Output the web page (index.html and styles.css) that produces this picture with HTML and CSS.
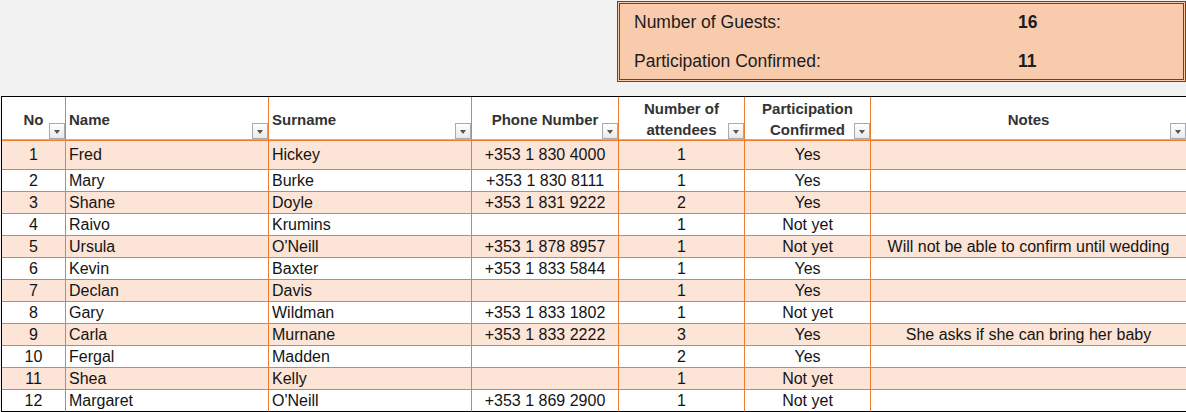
FILE: index.html
```html
<!DOCTYPE html>
<html>
<head>
<meta charset="utf-8">
<link rel="stylesheet" href="styles.css">
</head>
<body>
<div class="top">
  <div class="summary">
    <div class="s-label">Number of Guests:</div><div class="s-value">16</div>
    <div class="s-label">Participation Confirmed:</div><div class="s-value">11</div>
  </div>
</div>
<table class="guests">
  <colgroup>
    <col class="c-no"><col class="c-name"><col class="c-sur"><col class="c-phone"><col class="c-att"><col class="c-conf"><col class="c-notes">
  </colgroup>
  <thead>
    <tr>
      <th class="center">No<span class="filter"></span></th>
      <th class="left">Name<span class="filter"></span></th>
      <th class="left">Surname<span class="filter"></span></th>
      <th class="center">Phone Number<span class="filter"></span></th>
      <th class="center">Number of<br>attendees<span class="filter"></span></th>
      <th class="center">Participation<br>Confirmed<span class="filter"></span></th>
      <th class="center last">Notes<span class="filter"></span></th>
    </tr>
  </thead>
  <tbody>
    <tr class="band first"><td class="center">1</td><td>Fred</td><td>Hickey</td><td class="center">+353 1 830 4000</td><td class="center">1</td><td class="center">Yes</td><td class="center last"></td></tr>
    <tr><td class="center">2</td><td>Mary</td><td>Burke</td><td class="center">+353 1 830 8111</td><td class="center">1</td><td class="center">Yes</td><td class="center last"></td></tr>
    <tr class="band"><td class="center">3</td><td>Shane</td><td>Doyle</td><td class="center">+353 1 831 9222</td><td class="center">2</td><td class="center">Yes</td><td class="center last"></td></tr>
    <tr><td class="center">4</td><td>Raivo</td><td>Krumins</td><td class="center"></td><td class="center">1</td><td class="center">Not yet</td><td class="center last"></td></tr>
    <tr class="band"><td class="center">5</td><td>Ursula</td><td>O'Neill</td><td class="center">+353 1 878 8957</td><td class="center">1</td><td class="center">Not yet</td><td class="center last">Will not be able to confirm until wedding</td></tr>
    <tr><td class="center">6</td><td>Kevin</td><td>Baxter</td><td class="center">+353 1 833 5844</td><td class="center">1</td><td class="center">Yes</td><td class="center last"></td></tr>
    <tr class="band"><td class="center">7</td><td>Declan</td><td>Davis</td><td class="center"></td><td class="center">1</td><td class="center">Yes</td><td class="center last"></td></tr>
    <tr><td class="center">8</td><td>Gary</td><td>Wildman</td><td class="center">+353 1 833 1802</td><td class="center">1</td><td class="center">Not yet</td><td class="center last"></td></tr>
    <tr class="band"><td class="center">9</td><td>Carla</td><td>Murnane</td><td class="center">+353 1 833 2222</td><td class="center">3</td><td class="center">Yes</td><td class="center last">She asks if she can bring her baby</td></tr>
    <tr><td class="center">10</td><td>Fergal</td><td>Madden</td><td class="center"></td><td class="center">2</td><td class="center">Yes</td><td class="center last"></td></tr>
    <tr class="band"><td class="center">11</td><td>Shea</td><td>Kelly</td><td class="center"></td><td class="center">1</td><td class="center">Not yet</td><td class="center last"></td></tr>
    <tr class="final"><td class="center">12</td><td>Margaret</td><td>O'Neill</td><td class="center">+353 1 869 2900</td><td class="center">1</td><td class="center">Not yet</td><td class="center last"></td></tr>
  </tbody>
</table>
</body>
</html>
```
FILE: styles.css
```css
html, body {
  margin: 0;
  padding: 0;
  background: #f2f2f2;
  font-family: "Liberation Sans", Arial, sans-serif;
}

.top {
  display: flex;
  justify-content: flex-end;
  padding-top: 1px;
  height: 96px;
  box-sizing: border-box;
}

.summary {
  box-sizing: border-box;
  width: 569px;
  height: 81px;
  background: #f8cbad;
  border: 3px double #843c0c;
  display: grid;
  grid-template-columns: 384px auto;
  grid-template-rows: 36px 36px;
  row-gap: 3px;
  padding-left: 14px;
  align-items: center;
  font-size: 17.5px;
  color: #1c1c1c;
}

.s-value {
  font-weight: bold;
}

.guests {
  margin-left: 1px;
  border-collapse: separate;
  border-spacing: 0;
  table-layout: fixed;
  width: 1185px;
  background: #ffffff;
  border-top: 1px solid #000;
  border-left: 1px solid #000;
  font-size: 16px;
  color: #141414;
}

.c-no { width: 64px; }
.c-name { width: 203px; }
.c-sur { width: 203px; }
.c-phone { width: 147px; }
.c-att { width: 126px; }
.c-conf { width: 126px; }
.c-notes { width: 316px; }

.guests th,
.guests td {
  box-sizing: border-box;
  border-right: 1px solid #ed7d31;
  border-bottom: 1px solid #ed7d31;
  padding: 0 3px;
  vertical-align: middle;
  white-space: nowrap;
  overflow: hidden;
}

.guests th {
  position: relative;
  height: 44px;
  padding-top: 1px;
  font-size: 15px;
  font-weight: bold;
  line-height: 21px;
  color: #333333;
  background: #ffffff;
  box-shadow: inset 0 -1px 0 #b4b4b4;
}

.guests td {
  height: 22px;
  line-height: 20px;
}

.guests tr.first td {
  height: 29px;
}

.guests tr.band td {
  background: #fce4d6;
}

.guests tr.final td {
  border-bottom-color: #000;
}

.guests .last {
  border-right-color: #000;
}

.left { text-align: left; }
.center { text-align: center; }

.filter {
  position: absolute;
  right: 0;
  bottom: 1px;
  width: 16px;
  height: 16px;
  box-sizing: border-box;
  border: 1px solid #a7abb0;
  background: linear-gradient(#ffffff, #e9e9e9);
}

.filter::after {
  content: "";
  position: absolute;
  left: 4px;
  top: 6px;
  width: 0;
  height: 0;
  border-left: 3.5px solid transparent;
  border-right: 3.5px solid transparent;
  border-top: 4px solid #555555;
}
```
